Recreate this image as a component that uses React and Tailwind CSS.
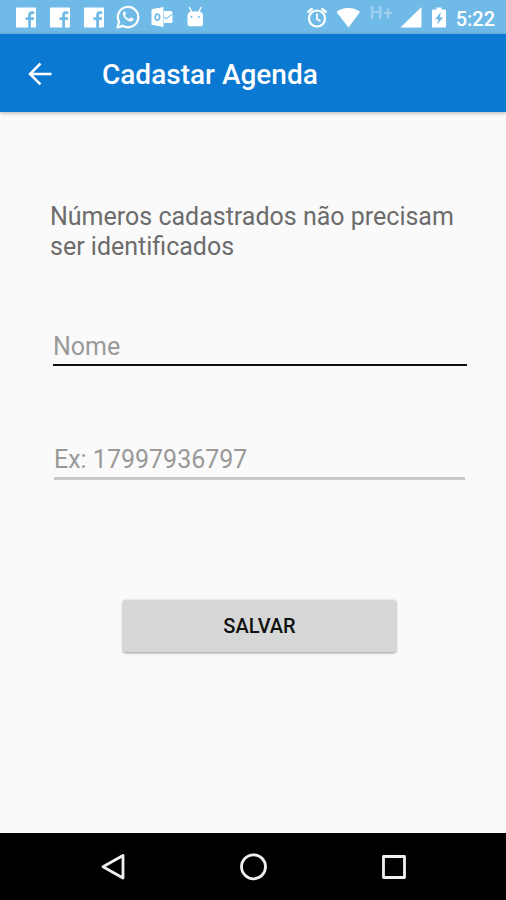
import { useState } from 'react'

function FacebookIcon() {
  return (
    <svg viewBox="0 0 24 24" className="w-6 h-6" fill="currentColor">
      <path d="M3 2.500h18a1 1 0 0 1 1 1v18a1 1 0 0 1-1 1h-4v-7.600h2.800l.4-2.600H17v-1.800c0-.9.4-1.400 1.500-1.400h1.700V6.500c-.4-.1-1.300-.2-2.300-.2-2.400 0-3.700 1.400-3.700 3.600v2.400h-2.700v2.600h2.700v7.600H3a1 1 0 0 1-1-1v-18a1 1 0 0 1 1-1z" />
    </svg>
  )
}

function WhatsAppIcon() {
  return (
    <svg viewBox="0 0 24 24" className="w-6 h-6">
      <path
        d="M1.500 22.500l1.600-5.600A10.200 10.200 0 1 1 7 20.900z"
        fill="none"
        stroke="currentColor"
        strokeWidth="2.200"
        strokeLinejoin="round"
      />
      <path
        d="M8.300 6.400c-.9.500-1.500 1.500-1.400 2.700.2 2.200 2.200 4.900 4.300 6.200 1.600 1 3.400 1.500 4.700 1 1-.4 1.600-1.200 1.600-2.200 0-.3-.1-.4-.4-.5l-2.200-1.100c-.3-.1-.5-.1-.7.2l-.9 1.100c-.2.2-.4.2-.6.1-1.600-.7-2.800-1.800-3.600-3.200-.1-.2-.1-.4.1-.6l.6-.7c.2-.2.2-.4.1-.7l-.9-2.100c-.1-.3-.4-.4-.7-.2z"
        fill="currentColor"
      />
    </svg>
  )
}

function OutlookIcon() {
  return (
    <svg viewBox="0 0 24 24" className="w-6 h-6">
      <path
        fillRule="evenodd"
        fill="currentColor"
        d="M1.500 4.200L13.500 2v20L1.500 19.800zM7.400 8.200c-1.900 0-3.100 1.500-3.100 3.900s1.200 3.900 3.100 3.900 3.100-1.500 3.100-3.900-1.200-3.900-3.100-3.900zm0 1.700c.8 0 1.300.8 1.300 2.200s-.5 2.200-1.300 2.200-1.300-.8-1.300-2.200.5-2.200 1.300-2.200z"
      />
      <path fill="currentColor" d="M14 6h7a1.500 1.500 0 0 1 1.500 1.500v.9l-6 4.700-2.500-1.700z" />
      <path fill="currentColor" d="M14 12.500l2.500 1.800 6-4.700v6.900A1.500 1.500 0 0 1 21 18h-7z" />
    </svg>
  )
}

function AndroidIcon() {
  return (
    <svg viewBox="0 0 24 24" className="w-6 h-6">
      <path d="M5.500 2.500l2.500 5M17 2.500l-2.500 5" stroke="currentColor" strokeWidth="1.400" strokeLinecap="round" />
      <path
        fillRule="evenodd"
        fill="currentColor"
        d="M3.500 10.500C3.500 8 5.500 6.500 8 6.500h6.500c2.500 0 4.500 1.500 4.500 4V19a2.300 2.300 0 0 1-2.300 2.300H5.800A2.300 2.300 0 0 1 3.500 19zM7.500 11a1 1 0 1 0 0 2 1 1 0 0 0 0-2zm7.500 0a1 1 0 1 0 0 2 1 1 0 0 0 0-2z"
      />
    </svg>
  )
}

function AlarmIcon() {
  return (
    <svg viewBox="0 0 24 24" className="w-6 h-6" fill="none" stroke="currentColor">
      <circle cx="12" cy="13.500" r="8" strokeWidth="2.200" />
      <path d="M12 8.500v5.500l3.500 2.200" strokeWidth="1.800" />
      <path d="M2.500 7.500l5-4.200M21.500 7.500l-5-4.200" strokeWidth="2.400" />
    </svg>
  )
}

function WifiIcon() {
  return (
    <svg viewBox="0 0 24 24" className="w-6 h-6" fill="currentColor">
      <path d="M12.500 22.500L.5 7c3-2.500 7.200-4 12-4s8.500 1.500 11.500 4z" />
    </svg>
  )
}

function SignalIcon() {
  return (
    <svg viewBox="0 0 22 24" className="w-[22px] h-6" fill="currentColor">
      <path d="M.5 22.500L21.500 2v20.500z" />
    </svg>
  )
}

function BatteryIcon() {
  return (
    <svg viewBox="0 0 20 24" className="w-5 h-6" fill="currentColor" fillRule="evenodd">
      <path d="M7.500 2.500h5v2h3.200c.7 0 1.300.6 1.300 1.300v15.400c0 .7-.6 1.300-1.300 1.300H4.300c-.7 0-1.300-.6-1.300-1.300V5.800c0-.7.6-1.300 1.300-1.300h3.200zM12 7l-6 7.200h3.400l-1.200 5.300 6-7.200h-3.400z" />
    </svg>
  )
}

function StatusBar() {
  return (
    <div className="flex items-center justify-between h-[34px] pl-[14px] pr-[11px] bg-[#70bae8] text-white">
      <div className="flex items-center gap-[10px]">
        <FacebookIcon />
        <FacebookIcon />
        <FacebookIcon />
        <WhatsAppIcon />
        <OutlookIcon />
        <AndroidIcon />
      </div>
      <div className="flex items-center gap-[7px]">
        <AlarmIcon />
        <WifiIcon />
        <span className="w-[26px] pb-2 text-right text-lg leading-5 font-medium text-white/35">H+</span>
        <SignalIcon />
        <BatteryIcon />
        <span className="pt-1 text-xl leading-6 font-medium">5:22</span>
      </div>
    </div>
  )
}

function AppBar() {
  return (
    <header className="flex items-center gap-[46px] h-[78px] px-6 pt-1 bg-[#0b78d1] text-white shadow-[0_1px_4px_rgba(0,0,0,0.3)]">
      <button type="button" aria-label="Voltar" className="p-1 pb-2">
        <svg viewBox="0 0 24 24" className="w-6 h-6" fill="none" stroke="currentColor" strokeWidth="2.500">
          <path d="M23.500 13H2.500M12.500 2.500L2 13l10.500 10.500" />
        </svg>
      </button>
      <h1 className="text-[28px] leading-8 font-medium">Cadastar Agenda</h1>
    </header>
  )
}

function NavBar() {
  return (
    <nav className="flex items-center justify-center gap-[109px] h-[67px] bg-black text-[#f0f0f0]">
      <button type="button" aria-label="Voltar">
        <svg viewBox="0 0 32 32" className="w-8 h-8" fill="none" stroke="currentColor" strokeWidth="2.800" strokeLinejoin="round">
          <path d="M27 4.500v22.500L7 15.800z" />
        </svg>
      </button>
      <button type="button" aria-label="Início">
        <svg viewBox="0 0 32 32" className="w-8 h-8" fill="none" stroke="currentColor" strokeWidth="2.800">
          <circle cx="16.500" cy="15.800" r="12" />
        </svg>
      </button>
      <button type="button" aria-label="Recentes">
        <svg viewBox="0 0 32 32" className="w-8 h-8" fill="none" stroke="currentColor" strokeWidth="2.800" strokeLinejoin="round">
          <rect x="5.500" y="5.500" width="21" height="21" />
        </svg>
      </button>
    </nav>
  )
}

export default function App() {
  const [nome, setNome] = useState('')
  const [telefone, setTelefone] = useState('')

  return (
    <div className="flex flex-col min-h-screen bg-[#fafafa] font-[Roboto,sans-serif]">
      <StatusBar />
      <AppBar />

      <main className="grow pt-[90px]">
        <form className="flex flex-col" onSubmit={(e) => e.preventDefault()}>
          <p className="pl-[50px] pr-9 text-[25px] leading-[30px] text-[#6c6c6c]">
            Números cadastrados não precisam ser identificados
          </p>
          <input
            type="text"
            aria-label="Nome"
            placeholder="Nome"
            value={nome}
            onChange={(e) => setNome(e.target.value)}
            className="mt-[62px] ml-[53px] mr-[39px] h-[42px] pt-1 border-b-2 border-[#111] text-[25px] text-[#333] placeholder:text-[#999] outline-none"
          />
          <input
            type="tel"
            aria-label="Telefone"
            placeholder="Ex: 17997936797"
            value={telefone}
            onChange={(e) => setTelefone(e.target.value)}
            className="mt-[72px] ml-[54px] mr-[41px] h-[42px] pt-1 border-b-3 border-[#c8c8c8] text-[25px] text-[#333] placeholder:text-[#999] outline-none"
          />
          <button
            type="submit"
            className="mt-[120px] ml-[123px] mr-[110px] h-[52px] rounded-xs bg-[#d6d8d7] text-xl font-medium text-[#111] shadow-[0_1px_3px_rgba(0,0,0,0.4)]"
          >
            SALVAR
          </button>
        </form>
      </main>

      <NavBar />
    </div>
  )
}
